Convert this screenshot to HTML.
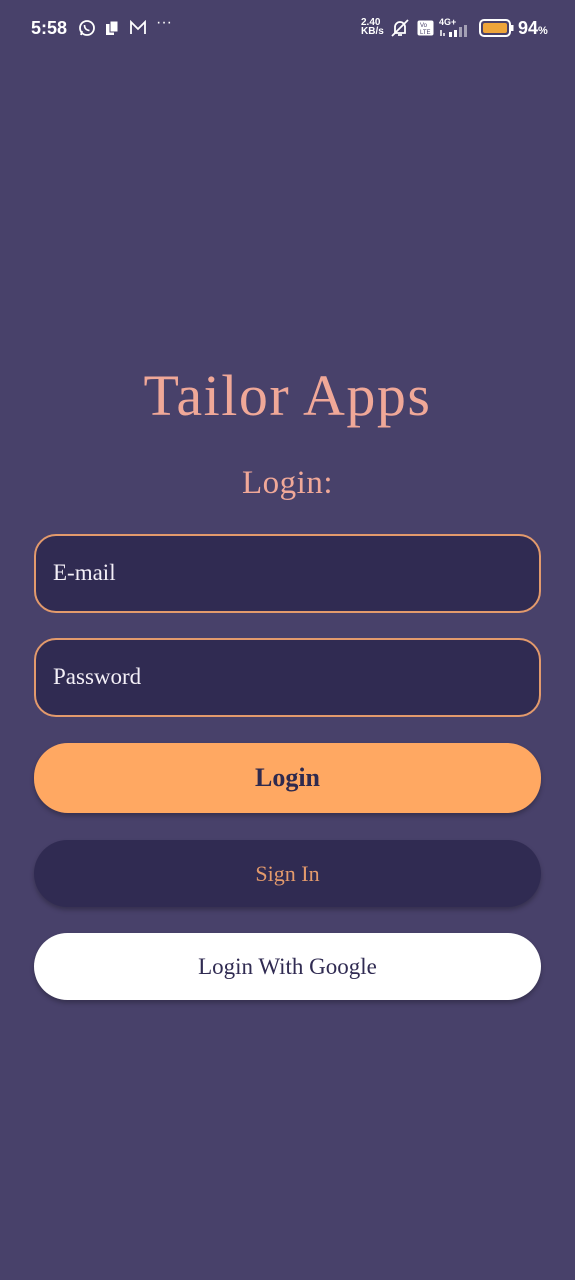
<!DOCTYPE html>
<html><head><meta charset="utf-8"><style>
html,body{margin:0;padding:0}
body{width:575px;height:1280px;background:#48416a;position:relative;overflow:hidden;font-family:"Liberation Serif",serif}
.sb{position:absolute;top:0;left:0;width:575px;height:60px;color:#fff;font-family:"Liberation Sans",sans-serif}
.abs{position:absolute}
.title{position:absolute;top:362px;width:575px;text-align:center;color:#f0a898;font-size:58px;letter-spacing:1.5px}
.sub{position:absolute;top:465px;width:575px;text-align:center;color:#f0a898;font-size:33px;letter-spacing:0.5px}
.field{position:absolute;left:34px;width:503px;height:75px;background:#302b52;border:2px solid #e39a6c;border-radius:22px;color:#f4f0f8;font-size:23px;box-sizing:content-box}
.field span{position:absolute;left:17px;top:24px}
.btn{position:absolute;left:34px;width:507px;border-radius:34px;text-align:center;box-shadow:0 3px 5px rgba(0,0,0,0.25)}
</style></head><body>
<div class="sb">
<div class="abs" style="left:31px;top:18px;font-size:18px;font-weight:bold">5:58</div>
<svg class="abs" style="left:78px;top:19px" width="18" height="18" viewBox="0 0 18 18"><circle cx="9" cy="9" r="7" fill="none" stroke="#fff" stroke-width="1.8"/><path d="M3 16 L4 12" stroke="#fff" stroke-width="1.8"/><path d="M6.5 6 q0 5 5 5.5" stroke="#fff" stroke-width="1.6" fill="none"/></svg>
<svg class="abs" style="left:105px;top:20px" width="14" height="16"><rect x="1" y="4" width="8" height="11" fill="#fff"/><rect x="5" y="1" width="8" height="11" fill="#fff" stroke="#48416a" stroke-width="1"/></svg>
<svg class="abs" style="left:129px;top:20px" width="18" height="15"><path d="M2 14V2l7 7 7-7v12" fill="none" stroke="#fff" stroke-width="1.8"/></svg>
<div class="abs" style="left:156px;top:14px;font-size:16px">···</div>
<div class="abs" style="left:361px;top:18px;font-size:10px;font-weight:bold;line-height:9px">2.40<br>KB/s</div>
<svg class="abs" style="left:389px;top:18px" width="22" height="20"><path d="M6 15 V9 a5 5 0 0 1 10 0 V15 Z M9 17h4" fill="none" stroke="#fff" stroke-width="1.8"/><path d="M3 18 L19 2" stroke="#fff" stroke-width="1.8"/></svg>
<svg class="abs" style="left:417px;top:20px" width="17" height="16"><rect x="0.5" y="0.5" width="16" height="15" rx="2" fill="#fff"/><text x="3" y="7" font-size="6" fill="#48416a" font-family="Liberation Sans">Vo</text><text x="3" y="14" font-size="6" fill="#48416a" font-family="Liberation Sans">LTE</text></svg>
<div class="abs" style="left:439px;top:17px;font-size:9px;font-weight:bold">4G+</div>
<svg class="abs" style="left:439px;top:25px" width="34" height="12"><rect x="10" y="7" width="3" height="5" fill="#fff"/><rect x="15" y="5" width="3" height="7" fill="#fff"/><rect x="20" y="2" width="3" height="10" fill="#fff" opacity=".5"/><rect x="25" y="0" width="3" height="12" fill="#fff" opacity=".5"/><path d="M2 5v6M5 8v3" stroke="#fff" stroke-width="1.5"/></svg>
<svg class="abs" style="left:479px;top:19px" width="36" height="18"><rect x="1" y="1" width="30" height="16" rx="4" fill="none" stroke="#fff" stroke-width="2"/><rect x="4" y="4" width="24" height="10" rx="2" fill="#eea53a"/><rect x="32" y="6" width="2.5" height="6" fill="#fff"/></svg>
<div class="abs" style="left:518px;top:18px;font-size:18px;font-weight:bold">94<span style="font-size:11px">%</span></div>
</div>
<div class="title">Tailor Apps</div>
<div class="sub">Login:</div>
<div class="field" style="top:534px"><span>E-mail</span></div>
<div class="field" style="top:638px"><span>Password</span></div>
<div class="btn" style="top:743px;height:70px;background:#ffa862;color:#2f2a4e;font-size:26px;font-weight:bold;line-height:70px">Login</div>
<div class="btn" style="top:840px;height:67px;background:#302b52;color:#e39a6c;font-size:22px;line-height:67px">Sign In</div>
<div class="btn" style="top:933px;height:67px;background:#fff;color:#302b52;font-size:23px;line-height:67px">Login With Google</div>
</body></html>
